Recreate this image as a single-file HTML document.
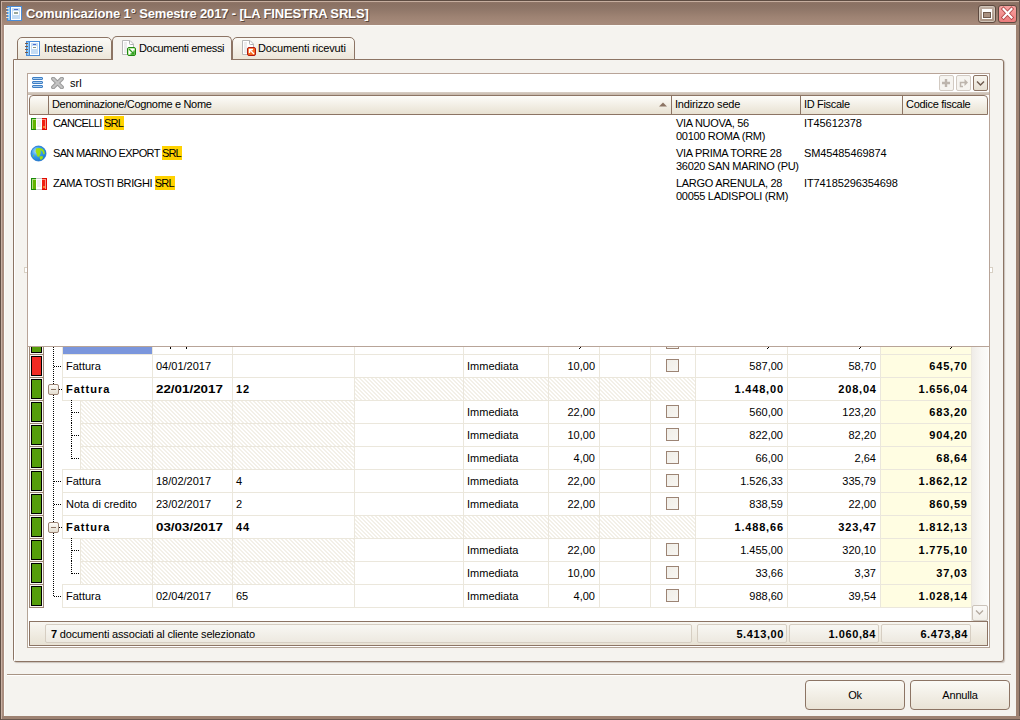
<!DOCTYPE html><html><head><meta charset="utf-8"><style>
html,body{margin:0;padding:0;}
body{width:1020px;height:720px;overflow:hidden;position:relative;background:#f5f3ef;font-family:"Liberation Sans", sans-serif;font-size:11px;color:#000;}
div{box-sizing:border-box;}
.t{position:absolute;white-space:nowrap;line-height:13px;}
.b{font-weight:bold;}
</style></head><body>
<div style="position:absolute;left:0px;top:0px;width:1020px;height:25px;background:linear-gradient(#957b6c 0px,#8a7163 4px,#8f7668 9px,#9e8373 17px,#a68a7b 24px);"></div>
<div style="position:absolute;left:0px;top:0px;width:1020px;height:1px;background:#5e4c42;"></div>
<div style="position:absolute;left:1px;top:1px;width:1018px;height:1px;background:#c6ae9f;"></div>
<div style="position:absolute;left:2px;top:25px;width:2px;height:691px;background:#aa8e80;"></div>
<div style="position:absolute;left:1016px;top:25px;width:3px;height:691px;background:#9e8272;"></div>
<div style="position:absolute;left:1019px;top:0px;width:1px;height:720px;background:#6a5850;"></div>
<div style="position:absolute;left:0px;top:716px;width:1020px;height:3px;background:#9e8272;"></div>
<div style="position:absolute;left:0px;top:719px;width:1020px;height:1px;background:#6a5850;"></div>
<div style="position:absolute;left:0px;top:0px;width:1px;height:720px;background:#604e44;"></div>
<div style="position:absolute;left:1px;top:1px;width:1px;height:718px;background:#c8b0a2;"></div>
<div style="position:absolute;left:4px;top:25px;width:1012px;height:1px;background:#fbfaf6;"></div>
<div style="position:absolute;left:4px;top:25px;width:1px;height:691px;background:#fcfcf8;"></div>
<svg style="position:absolute;left:6px;top:6px" width="16" height="15" viewBox="0 0 16 15" shape-rendering="crispEdges">
<rect x="1" y="0" width="15" height="15" fill="#4a8cd8"/>
<rect x="2" y="1" width="2" height="13" fill="#8cc8f4"/>
<rect x="5" y="1" width="10" height="13" fill="#ffffff"/>
<rect x="6" y="2" width="8" height="11" fill="#c4dcf4"/>
<rect x="8" y="3" width="4" height="1" fill="#4a6ad0"/>
<rect x="7" y="5" width="6" height="4" fill="#ffffff"/>
<rect x="8" y="6" width="4" height="2" fill="#9aa89a"/>
<g fill="#e8e0d8"><rect x="0" y="2" width="3" height="1"/><rect x="0" y="5" width="3" height="1"/><rect x="0" y="8" width="3" height="1"/><rect x="0" y="11" width="3" height="1"/></g>
</svg>
<div class="t" style="left:26px;top:5px;font-size:13px;line-height:16px;font-weight:bold;color:#fff;text-shadow:1px 1px 0 #5a463c;letter-spacing:-0.15px;top:6px">Comunicazione 1° Semestre 2017 - [LA FINESTRA SRLS]</div>
<div style="position:absolute;left:978px;top:5px;width:18px;height:18px;border:1px solid #5e4a40;border-radius:3px;background:linear-gradient(#c0b0a4,#a89282);box-shadow:inset 0 0 0 1px #d0c4b8"></div>
<div style="position:absolute;left:982px;top:9px;width:10px;height:10px;background:#fff;"></div>
<div style="position:absolute;left:983px;top:12px;width:8px;height:6px;background:#a89080;border:1px solid #6e5a4e"></div>
<div style="position:absolute;left:998px;top:5px;width:19px;height:18px;border:1px solid #5e4a40;border-radius:3px;background:linear-gradient(#f7a4a2,#ec7c7c);"></div>
<svg style="position:absolute;left:998px;top:5px" width="19" height="18" viewBox="0 0 19 18">
<path d="M5.5 4 L13.5 12.5 M13.5 4 L5.5 12.5" stroke="#b04848" stroke-width="3.8" stroke-linecap="square"/>
<path d="M5.5 4 L13.5 12.5 M13.5 4 L5.5 12.5" stroke="#ffffff" stroke-width="2.1" stroke-linecap="square"/>
</svg>
<div style="position:absolute;left:13px;top:59px;width:991px;height:603px;border:1px solid #8c7464;border-radius:0 3px 3px 3px;background:#f5f3ef;box-shadow:1px 1px 1px rgba(120,100,90,0.35);"></div>
<div style="position:absolute;left:14px;top:60px;width:1px;height:601px;background:#ffffff;"></div>
<div style="position:absolute;left:17px;top:37px;width:95px;height:23px;border:1px solid #8c7464;border-radius:5px 5px 0 0;background:linear-gradient(#fbfaf6,#ece6d9);"></div>
<div style="position:absolute;left:232px;top:37px;width:123px;height:23px;border:1px solid #8c7464;border-radius:5px 5px 0 0;background:linear-gradient(#fbfaf6,#ece6d9);"></div>
<div style="position:absolute;left:112px;top:36px;width:120px;height:24px;border:1px solid #8c7464;border-bottom:none;border-radius:5px 5px 0 0;background:#f5f3ef;"></div>
<div class="t" style="left:44px;top:42px;text-align:left;line-height:13px">Intestazione</div>
<div class="t" style="left:139px;top:42px;text-align:left;letter-spacing:-0.33px">Documenti emessi</div>
<div class="t" style="left:258px;top:42px;text-align:left;letter-spacing:-0.15px">Documenti ricevuti</div>
<svg style="position:absolute;left:25px;top:41px" width="16" height="15" viewBox="0 0 16 15" shape-rendering="crispEdges">
<rect x="1" y="0" width="14" height="15" fill="#4a8cd8"/>
<rect x="2" y="1" width="2" height="13" fill="#8cc8f4"/>
<rect x="5" y="1" width="9" height="13" fill="#ffffff"/>
<rect x="6" y="2" width="7" height="11" fill="#c4dcf4"/>
<rect x="8" y="3" width="3" height="1" fill="#4a6ad0"/>
<rect x="7" y="5" width="5" height="3" fill="#ffffff"/>
<rect x="8" y="6" width="3" height="1" fill="#8a9a8a"/>
<g fill="#7a5a48"><rect x="0" y="2" width="3" height="1"/><rect x="0" y="5" width="3" height="1"/><rect x="0" y="8" width="3" height="1"/><rect x="0" y="11" width="3" height="1"/></g>
</svg>
<svg style="position:absolute;left:122px;top:40px" width="14" height="16" viewBox="0 0 14 16">
<path d="M0.5 0.5 H8 L11.5 4 V14.5 H0.5 Z" fill="#ffffff" stroke="#b8b8b8"/>
<rect x="2" y="2" width="3" height="11" fill="#ececec"/>
<path d="M7.5 1 V3.5 Q7.5 4.5 8.5 4.5 H11" fill="none" stroke="#b0b0b0"/>
<rect x="5.5" y="7.5" width="8" height="8" rx="1.5" fill="#c8f0b0" stroke="#1e8a10"/>
<rect x="7" y="9" width="5" height="5" fill="#ffffff"/>
<path d="M7 9 L12 14 M12 10.5 V14 H8.5" stroke="#30a020" stroke-width="1.3" fill="none"/>
</svg>
<svg style="position:absolute;left:242px;top:40px" width="14" height="16" viewBox="0 0 14 16">
<path d="M0.5 0.5 H8 L11.5 4 V14.5 H0.5 Z" fill="#ffffff" stroke="#b8b8b8"/>
<rect x="2" y="2" width="3" height="11" fill="#ececec"/>
<path d="M7.5 1 V3.5 Q7.5 4.5 8.5 4.5 H11" fill="none" stroke="#b0b0b0"/>
<rect x="5.5" y="7.5" width="8" height="8" rx="1.5" fill="#f86a20" stroke="#b01810"/>
<path d="M12 14 L7.5 9.5 M7.5 13 V9.5 H11" stroke="#ffffff" stroke-width="1.4" fill="none"/>
</svg>
<svg width="0" height="0" style="position:absolute"><defs><pattern id="hp" x="0" y="0" width="4" height="4" patternUnits="userSpaceOnUse"><g fill="#f3f0e8" shape-rendering="crispEdges"><rect x="0" y="0" width="2" height="1"/><rect x="1" y="1" width="2" height="1"/><rect x="2" y="2" width="2" height="1"/><rect x="3" y="3" width="1" height="1"/><rect x="0" y="3" width="1" height="1"/></g></pattern></defs></svg>
<div style="position:absolute;left:27px;top:73px;width:963px;height:575px;border:1px solid #b4a496;background:#ffffff;"></div>
<div style="position:absolute;left:971px;top:331px;width:17px;height:290px;background:linear-gradient(90deg,#eeebe6,#f8f7f4 60%,#fbfbf9);"></div>
<div style="position:absolute;left:972px;top:605px;width:16px;height:16px;border:1px solid #cbc3ba;border-radius:2px;background:linear-gradient(#fbfaf8,#f1eee8)"></div>
<svg style="position:absolute;left:972px;top:605px" width="16" height="16" viewBox="0 0 16 16"><path d="M4 5.5 L7.5 9 L11 5.5" stroke="#b4aaa0" stroke-width="1.3" fill="none"/></svg>
<div style="position:absolute;left:29px;top:331px;width:15px;height:24px;border:1px solid #9c8676;background:#f8f6f0;"></div>
<div style="position:absolute;left:31px;top:333px;width:11px;height:20px;border:1px solid #000;background:#559e0a;"></div>
<div style="position:absolute;left:62px;top:331px;width:91px;height:24px;border:1px solid #ebe7dc;"></div>
<div style="position:absolute;left:152px;top:331px;width:81px;height:24px;border:1px solid #ebe7dc;"></div>
<div style="position:absolute;left:232px;top:331px;width:123px;height:24px;border:1px solid #ebe7dc;"></div>
<div style="position:absolute;left:354px;top:331px;width:110px;height:24px;border:1px solid #ebe7dc;"></div>
<div style="position:absolute;left:463px;top:331px;width:86px;height:24px;border:1px solid #ebe7dc;"></div>
<div style="position:absolute;left:548px;top:331px;width:52px;height:24px;border:1px solid #ebe7dc;"></div>
<div style="position:absolute;left:599px;top:331px;width:52px;height:24px;border:1px solid #ebe7dc;"></div>
<div style="position:absolute;left:650px;top:331px;width:46px;height:24px;border:1px solid #ebe7dc;"></div>
<div style="position:absolute;left:666px;top:336px;width:13px;height:13px;border:1px solid #9c8474;background:linear-gradient(135deg,#f0eee8,#f8f6f2);"></div>
<div style="position:absolute;left:695px;top:331px;width:93px;height:24px;border:1px solid #ebe7dc;"></div>
<div style="position:absolute;left:787px;top:331px;width:94px;height:24px;border:1px solid #ebe7dc;"></div>
<div style="position:absolute;left:880px;top:331px;width:92px;height:24px;border:1px solid #ebe7dc;background:#fffde2;"></div>
<div style="position:absolute;left:29px;top:354px;width:15px;height:24px;border:1px solid #9c8676;background:#f8f6f0;"></div>
<div style="position:absolute;left:31px;top:356px;width:11px;height:20px;border:1px solid #000;background:#f02a22;"></div>
<div style="position:absolute;left:62px;top:354px;width:91px;height:24px;border:1px solid #ebe7dc;"></div>
<div class="t" style="left:66px;top:360px;text-align:left;">Fattura</div>
<div style="position:absolute;left:152px;top:354px;width:81px;height:24px;border:1px solid #ebe7dc;"></div>
<div class="t" style="left:156px;top:360px;text-align:left;">04/01/2017</div>
<div style="position:absolute;left:232px;top:354px;width:123px;height:24px;border:1px solid #ebe7dc;"></div>
<div style="position:absolute;left:354px;top:354px;width:110px;height:24px;border:1px solid #ebe7dc;"></div>
<div style="position:absolute;left:463px;top:354px;width:86px;height:24px;border:1px solid #ebe7dc;"></div>
<div class="t" style="left:467px;top:360px;text-align:left;">Immediata</div>
<div style="position:absolute;left:548px;top:354px;width:52px;height:24px;border:1px solid #ebe7dc;"></div>
<div class="t" style="left:548px;top:360px;width:47px;text-align:right;">10,00</div>
<div style="position:absolute;left:599px;top:354px;width:52px;height:24px;border:1px solid #ebe7dc;"></div>
<div style="position:absolute;left:650px;top:354px;width:46px;height:24px;border:1px solid #ebe7dc;"></div>
<div style="position:absolute;left:666px;top:359px;width:13px;height:13px;border:1px solid #9c8474;background:linear-gradient(135deg,#f0eee8,#f8f6f2);"></div>
<div style="position:absolute;left:695px;top:354px;width:93px;height:24px;border:1px solid #ebe7dc;"></div>
<div class="t" style="left:695px;top:360px;width:88px;text-align:right;">587,00</div>
<div style="position:absolute;left:787px;top:354px;width:94px;height:24px;border:1px solid #ebe7dc;"></div>
<div class="t" style="left:787px;top:360px;width:89px;text-align:right;">58,70</div>
<div style="position:absolute;left:880px;top:354px;width:92px;height:24px;border:1px solid #ebe7dc;background:#fffde2;"></div>
<div class="t" style="left:880px;top:360px;width:87.8px;text-align:right;font-weight:bold;letter-spacing:0.8px;">645,70</div>
<div style="position:absolute;left:29px;top:377px;width:15px;height:24px;border:1px solid #9c8676;background:#f8f6f0;"></div>
<div style="position:absolute;left:31px;top:379px;width:11px;height:20px;border:1px solid #000;background:#559e0a;"></div>
<div style="position:absolute;left:62px;top:377px;width:91px;height:24px;border:1px solid #ebe7dc;"></div>
<div class="t" style="left:66px;top:383px;text-align:left;font-weight:bold;letter-spacing:1.0px;">Fattura</div>
<div style="position:absolute;left:152px;top:377px;width:81px;height:24px;border:1px solid #ebe7dc;"></div>
<div class="t" style="left:156px;top:383px;text-align:left;font-weight:bold;letter-spacing:0px;transform:scaleX(1.215);transform-origin:0 0;">22/01/2017</div>
<div style="position:absolute;left:232px;top:377px;width:123px;height:24px;border:1px solid #ebe7dc;"></div>
<div class="t" style="left:236px;top:383px;text-align:left;font-weight:bold;letter-spacing:0.8px;">12</div>
<div style="position:absolute;left:354px;top:377px;width:110px;height:24px;border:1px solid #ebe7dc;background:#fff;"><svg width="108" height="22" style="display:block"><rect width="108" height="22" fill="url(#hp)"/></svg></div>
<div style="position:absolute;left:463px;top:377px;width:86px;height:24px;border:1px solid #ebe7dc;background:#fff;"><svg width="84" height="22" style="display:block"><rect width="84" height="22" fill="url(#hp)"/></svg></div>
<div style="position:absolute;left:548px;top:377px;width:52px;height:24px;border:1px solid #ebe7dc;background:#fff;"><svg width="50" height="22" style="display:block"><rect width="50" height="22" fill="url(#hp)"/></svg></div>
<div style="position:absolute;left:599px;top:377px;width:52px;height:24px;border:1px solid #ebe7dc;background:#fff;"><svg width="50" height="22" style="display:block"><rect width="50" height="22" fill="url(#hp)"/></svg></div>
<div style="position:absolute;left:650px;top:377px;width:46px;height:24px;border:1px solid #ebe7dc;background:#fff;"><svg width="44" height="22" style="display:block"><rect width="44" height="22" fill="url(#hp)"/></svg></div>
<div style="position:absolute;left:695px;top:377px;width:93px;height:24px;border:1px solid #ebe7dc;"></div>
<div class="t" style="left:695px;top:383px;width:88.8px;text-align:right;font-weight:bold;letter-spacing:0.8px;">1.448,00</div>
<div style="position:absolute;left:787px;top:377px;width:94px;height:24px;border:1px solid #ebe7dc;"></div>
<div class="t" style="left:787px;top:383px;width:89.8px;text-align:right;font-weight:bold;letter-spacing:0.8px;">208,04</div>
<div style="position:absolute;left:880px;top:377px;width:92px;height:24px;border:1px solid #ebe7dc;background:#fffde2;"></div>
<div class="t" style="left:880px;top:383px;width:87.8px;text-align:right;font-weight:bold;letter-spacing:0.8px;">1.656,04</div>
<div style="position:absolute;left:29px;top:400px;width:15px;height:24px;border:1px solid #9c8676;background:#f8f6f0;"></div>
<div style="position:absolute;left:31px;top:402px;width:11px;height:20px;border:1px solid #000;background:#559e0a;"></div>
<div style="position:absolute;left:80px;top:400px;width:73px;height:24px;border:1px solid #ebe7dc;background:#fff;"><svg width="71" height="22" style="display:block"><rect width="71" height="22" fill="url(#hp)"/></svg></div>
<div style="position:absolute;left:152px;top:400px;width:81px;height:24px;border:1px solid #ebe7dc;background:#fff;"><svg width="79" height="22" style="display:block"><rect width="79" height="22" fill="url(#hp)"/></svg></div>
<div style="position:absolute;left:232px;top:400px;width:123px;height:24px;border:1px solid #ebe7dc;background:#fff;"><svg width="121" height="22" style="display:block"><rect width="121" height="22" fill="url(#hp)"/></svg></div>
<div style="position:absolute;left:354px;top:400px;width:110px;height:24px;border:1px solid #ebe7dc;"></div>
<div style="position:absolute;left:463px;top:400px;width:86px;height:24px;border:1px solid #ebe7dc;"></div>
<div class="t" style="left:467px;top:406px;text-align:left;">Immediata</div>
<div style="position:absolute;left:548px;top:400px;width:52px;height:24px;border:1px solid #ebe7dc;"></div>
<div class="t" style="left:548px;top:406px;width:47px;text-align:right;">22,00</div>
<div style="position:absolute;left:599px;top:400px;width:52px;height:24px;border:1px solid #ebe7dc;"></div>
<div style="position:absolute;left:650px;top:400px;width:46px;height:24px;border:1px solid #ebe7dc;"></div>
<div style="position:absolute;left:666px;top:405px;width:13px;height:13px;border:1px solid #9c8474;background:linear-gradient(135deg,#f0eee8,#f8f6f2);"></div>
<div style="position:absolute;left:695px;top:400px;width:93px;height:24px;border:1px solid #ebe7dc;"></div>
<div class="t" style="left:695px;top:406px;width:88px;text-align:right;">560,00</div>
<div style="position:absolute;left:787px;top:400px;width:94px;height:24px;border:1px solid #ebe7dc;"></div>
<div class="t" style="left:787px;top:406px;width:89px;text-align:right;">123,20</div>
<div style="position:absolute;left:880px;top:400px;width:92px;height:24px;border:1px solid #ebe7dc;background:#fffde2;"></div>
<div class="t" style="left:880px;top:406px;width:87.8px;text-align:right;font-weight:bold;letter-spacing:0.8px;">683,20</div>
<div style="position:absolute;left:29px;top:423px;width:15px;height:24px;border:1px solid #9c8676;background:#f8f6f0;"></div>
<div style="position:absolute;left:31px;top:425px;width:11px;height:20px;border:1px solid #000;background:#559e0a;"></div>
<div style="position:absolute;left:80px;top:423px;width:73px;height:24px;border:1px solid #ebe7dc;background:#fff;"><svg width="71" height="22" style="display:block"><rect width="71" height="22" fill="url(#hp)"/></svg></div>
<div style="position:absolute;left:152px;top:423px;width:81px;height:24px;border:1px solid #ebe7dc;background:#fff;"><svg width="79" height="22" style="display:block"><rect width="79" height="22" fill="url(#hp)"/></svg></div>
<div style="position:absolute;left:232px;top:423px;width:123px;height:24px;border:1px solid #ebe7dc;background:#fff;"><svg width="121" height="22" style="display:block"><rect width="121" height="22" fill="url(#hp)"/></svg></div>
<div style="position:absolute;left:354px;top:423px;width:110px;height:24px;border:1px solid #ebe7dc;"></div>
<div style="position:absolute;left:463px;top:423px;width:86px;height:24px;border:1px solid #ebe7dc;"></div>
<div class="t" style="left:467px;top:429px;text-align:left;">Immediata</div>
<div style="position:absolute;left:548px;top:423px;width:52px;height:24px;border:1px solid #ebe7dc;"></div>
<div class="t" style="left:548px;top:429px;width:47px;text-align:right;">10,00</div>
<div style="position:absolute;left:599px;top:423px;width:52px;height:24px;border:1px solid #ebe7dc;"></div>
<div style="position:absolute;left:650px;top:423px;width:46px;height:24px;border:1px solid #ebe7dc;"></div>
<div style="position:absolute;left:666px;top:428px;width:13px;height:13px;border:1px solid #9c8474;background:linear-gradient(135deg,#f0eee8,#f8f6f2);"></div>
<div style="position:absolute;left:695px;top:423px;width:93px;height:24px;border:1px solid #ebe7dc;"></div>
<div class="t" style="left:695px;top:429px;width:88px;text-align:right;">822,00</div>
<div style="position:absolute;left:787px;top:423px;width:94px;height:24px;border:1px solid #ebe7dc;"></div>
<div class="t" style="left:787px;top:429px;width:89px;text-align:right;">82,20</div>
<div style="position:absolute;left:880px;top:423px;width:92px;height:24px;border:1px solid #ebe7dc;background:#fffde2;"></div>
<div class="t" style="left:880px;top:429px;width:87.8px;text-align:right;font-weight:bold;letter-spacing:0.8px;">904,20</div>
<div style="position:absolute;left:29px;top:446px;width:15px;height:24px;border:1px solid #9c8676;background:#f8f6f0;"></div>
<div style="position:absolute;left:31px;top:448px;width:11px;height:20px;border:1px solid #000;background:#559e0a;"></div>
<div style="position:absolute;left:80px;top:446px;width:73px;height:24px;border:1px solid #ebe7dc;background:#fff;"><svg width="71" height="22" style="display:block"><rect width="71" height="22" fill="url(#hp)"/></svg></div>
<div style="position:absolute;left:152px;top:446px;width:81px;height:24px;border:1px solid #ebe7dc;background:#fff;"><svg width="79" height="22" style="display:block"><rect width="79" height="22" fill="url(#hp)"/></svg></div>
<div style="position:absolute;left:232px;top:446px;width:123px;height:24px;border:1px solid #ebe7dc;background:#fff;"><svg width="121" height="22" style="display:block"><rect width="121" height="22" fill="url(#hp)"/></svg></div>
<div style="position:absolute;left:354px;top:446px;width:110px;height:24px;border:1px solid #ebe7dc;"></div>
<div style="position:absolute;left:463px;top:446px;width:86px;height:24px;border:1px solid #ebe7dc;"></div>
<div class="t" style="left:467px;top:452px;text-align:left;">Immediata</div>
<div style="position:absolute;left:548px;top:446px;width:52px;height:24px;border:1px solid #ebe7dc;"></div>
<div class="t" style="left:548px;top:452px;width:47px;text-align:right;">4,00</div>
<div style="position:absolute;left:599px;top:446px;width:52px;height:24px;border:1px solid #ebe7dc;"></div>
<div style="position:absolute;left:650px;top:446px;width:46px;height:24px;border:1px solid #ebe7dc;"></div>
<div style="position:absolute;left:666px;top:451px;width:13px;height:13px;border:1px solid #9c8474;background:linear-gradient(135deg,#f0eee8,#f8f6f2);"></div>
<div style="position:absolute;left:695px;top:446px;width:93px;height:24px;border:1px solid #ebe7dc;"></div>
<div class="t" style="left:695px;top:452px;width:88px;text-align:right;">66,00</div>
<div style="position:absolute;left:787px;top:446px;width:94px;height:24px;border:1px solid #ebe7dc;"></div>
<div class="t" style="left:787px;top:452px;width:89px;text-align:right;">2,64</div>
<div style="position:absolute;left:880px;top:446px;width:92px;height:24px;border:1px solid #ebe7dc;background:#fffde2;"></div>
<div class="t" style="left:880px;top:452px;width:87.8px;text-align:right;font-weight:bold;letter-spacing:0.8px;">68,64</div>
<div style="position:absolute;left:29px;top:469px;width:15px;height:24px;border:1px solid #9c8676;background:#f8f6f0;"></div>
<div style="position:absolute;left:31px;top:471px;width:11px;height:20px;border:1px solid #000;background:#559e0a;"></div>
<div style="position:absolute;left:62px;top:469px;width:91px;height:24px;border:1px solid #ebe7dc;"></div>
<div class="t" style="left:66px;top:475px;text-align:left;">Fattura</div>
<div style="position:absolute;left:152px;top:469px;width:81px;height:24px;border:1px solid #ebe7dc;"></div>
<div class="t" style="left:156px;top:475px;text-align:left;">18/02/2017</div>
<div style="position:absolute;left:232px;top:469px;width:123px;height:24px;border:1px solid #ebe7dc;"></div>
<div class="t" style="left:236px;top:475px;text-align:left;">4</div>
<div style="position:absolute;left:354px;top:469px;width:110px;height:24px;border:1px solid #ebe7dc;"></div>
<div style="position:absolute;left:463px;top:469px;width:86px;height:24px;border:1px solid #ebe7dc;"></div>
<div class="t" style="left:467px;top:475px;text-align:left;">Immediata</div>
<div style="position:absolute;left:548px;top:469px;width:52px;height:24px;border:1px solid #ebe7dc;"></div>
<div class="t" style="left:548px;top:475px;width:47px;text-align:right;">22,00</div>
<div style="position:absolute;left:599px;top:469px;width:52px;height:24px;border:1px solid #ebe7dc;"></div>
<div style="position:absolute;left:650px;top:469px;width:46px;height:24px;border:1px solid #ebe7dc;"></div>
<div style="position:absolute;left:666px;top:474px;width:13px;height:13px;border:1px solid #9c8474;background:linear-gradient(135deg,#f0eee8,#f8f6f2);"></div>
<div style="position:absolute;left:695px;top:469px;width:93px;height:24px;border:1px solid #ebe7dc;"></div>
<div class="t" style="left:695px;top:475px;width:88px;text-align:right;">1.526,33</div>
<div style="position:absolute;left:787px;top:469px;width:94px;height:24px;border:1px solid #ebe7dc;"></div>
<div class="t" style="left:787px;top:475px;width:89px;text-align:right;">335,79</div>
<div style="position:absolute;left:880px;top:469px;width:92px;height:24px;border:1px solid #ebe7dc;background:#fffde2;"></div>
<div class="t" style="left:880px;top:475px;width:87.8px;text-align:right;font-weight:bold;letter-spacing:0.8px;">1.862,12</div>
<div style="position:absolute;left:29px;top:492px;width:15px;height:24px;border:1px solid #9c8676;background:#f8f6f0;"></div>
<div style="position:absolute;left:31px;top:494px;width:11px;height:20px;border:1px solid #000;background:#559e0a;"></div>
<div style="position:absolute;left:62px;top:492px;width:91px;height:24px;border:1px solid #ebe7dc;"></div>
<div class="t" style="left:66px;top:498px;text-align:left;">Nota di credito</div>
<div style="position:absolute;left:152px;top:492px;width:81px;height:24px;border:1px solid #ebe7dc;"></div>
<div class="t" style="left:156px;top:498px;text-align:left;">23/02/2017</div>
<div style="position:absolute;left:232px;top:492px;width:123px;height:24px;border:1px solid #ebe7dc;"></div>
<div class="t" style="left:236px;top:498px;text-align:left;">2</div>
<div style="position:absolute;left:354px;top:492px;width:110px;height:24px;border:1px solid #ebe7dc;"></div>
<div style="position:absolute;left:463px;top:492px;width:86px;height:24px;border:1px solid #ebe7dc;"></div>
<div class="t" style="left:467px;top:498px;text-align:left;">Immediata</div>
<div style="position:absolute;left:548px;top:492px;width:52px;height:24px;border:1px solid #ebe7dc;"></div>
<div class="t" style="left:548px;top:498px;width:47px;text-align:right;">22,00</div>
<div style="position:absolute;left:599px;top:492px;width:52px;height:24px;border:1px solid #ebe7dc;"></div>
<div style="position:absolute;left:650px;top:492px;width:46px;height:24px;border:1px solid #ebe7dc;"></div>
<div style="position:absolute;left:666px;top:497px;width:13px;height:13px;border:1px solid #9c8474;background:linear-gradient(135deg,#f0eee8,#f8f6f2);"></div>
<div style="position:absolute;left:695px;top:492px;width:93px;height:24px;border:1px solid #ebe7dc;"></div>
<div class="t" style="left:695px;top:498px;width:88px;text-align:right;">838,59</div>
<div style="position:absolute;left:787px;top:492px;width:94px;height:24px;border:1px solid #ebe7dc;"></div>
<div class="t" style="left:787px;top:498px;width:89px;text-align:right;">22,00</div>
<div style="position:absolute;left:880px;top:492px;width:92px;height:24px;border:1px solid #ebe7dc;background:#fffde2;"></div>
<div class="t" style="left:880px;top:498px;width:87.8px;text-align:right;font-weight:bold;letter-spacing:0.8px;">860,59</div>
<div style="position:absolute;left:29px;top:515px;width:15px;height:24px;border:1px solid #9c8676;background:#f8f6f0;"></div>
<div style="position:absolute;left:31px;top:517px;width:11px;height:20px;border:1px solid #000;background:#559e0a;"></div>
<div style="position:absolute;left:62px;top:515px;width:91px;height:24px;border:1px solid #ebe7dc;"></div>
<div class="t" style="left:66px;top:521px;text-align:left;font-weight:bold;letter-spacing:1.0px;">Fattura</div>
<div style="position:absolute;left:152px;top:515px;width:81px;height:24px;border:1px solid #ebe7dc;"></div>
<div class="t" style="left:156px;top:521px;text-align:left;font-weight:bold;letter-spacing:0px;transform:scaleX(1.215);transform-origin:0 0;">03/03/2017</div>
<div style="position:absolute;left:232px;top:515px;width:123px;height:24px;border:1px solid #ebe7dc;"></div>
<div class="t" style="left:236px;top:521px;text-align:left;font-weight:bold;letter-spacing:0.8px;">44</div>
<div style="position:absolute;left:354px;top:515px;width:110px;height:24px;border:1px solid #ebe7dc;background:#fff;"><svg width="108" height="22" style="display:block"><rect width="108" height="22" fill="url(#hp)"/></svg></div>
<div style="position:absolute;left:463px;top:515px;width:86px;height:24px;border:1px solid #ebe7dc;background:#fff;"><svg width="84" height="22" style="display:block"><rect width="84" height="22" fill="url(#hp)"/></svg></div>
<div style="position:absolute;left:548px;top:515px;width:52px;height:24px;border:1px solid #ebe7dc;background:#fff;"><svg width="50" height="22" style="display:block"><rect width="50" height="22" fill="url(#hp)"/></svg></div>
<div style="position:absolute;left:599px;top:515px;width:52px;height:24px;border:1px solid #ebe7dc;background:#fff;"><svg width="50" height="22" style="display:block"><rect width="50" height="22" fill="url(#hp)"/></svg></div>
<div style="position:absolute;left:650px;top:515px;width:46px;height:24px;border:1px solid #ebe7dc;background:#fff;"><svg width="44" height="22" style="display:block"><rect width="44" height="22" fill="url(#hp)"/></svg></div>
<div style="position:absolute;left:695px;top:515px;width:93px;height:24px;border:1px solid #ebe7dc;"></div>
<div class="t" style="left:695px;top:521px;width:88.8px;text-align:right;font-weight:bold;letter-spacing:0.8px;">1.488,66</div>
<div style="position:absolute;left:787px;top:515px;width:94px;height:24px;border:1px solid #ebe7dc;"></div>
<div class="t" style="left:787px;top:521px;width:89.8px;text-align:right;font-weight:bold;letter-spacing:0.8px;">323,47</div>
<div style="position:absolute;left:880px;top:515px;width:92px;height:24px;border:1px solid #ebe7dc;background:#fffde2;"></div>
<div class="t" style="left:880px;top:521px;width:87.8px;text-align:right;font-weight:bold;letter-spacing:0.8px;">1.812,13</div>
<div style="position:absolute;left:29px;top:538px;width:15px;height:24px;border:1px solid #9c8676;background:#f8f6f0;"></div>
<div style="position:absolute;left:31px;top:540px;width:11px;height:20px;border:1px solid #000;background:#559e0a;"></div>
<div style="position:absolute;left:80px;top:538px;width:73px;height:24px;border:1px solid #ebe7dc;background:#fff;"><svg width="71" height="22" style="display:block"><rect width="71" height="22" fill="url(#hp)"/></svg></div>
<div style="position:absolute;left:152px;top:538px;width:81px;height:24px;border:1px solid #ebe7dc;background:#fff;"><svg width="79" height="22" style="display:block"><rect width="79" height="22" fill="url(#hp)"/></svg></div>
<div style="position:absolute;left:232px;top:538px;width:123px;height:24px;border:1px solid #ebe7dc;background:#fff;"><svg width="121" height="22" style="display:block"><rect width="121" height="22" fill="url(#hp)"/></svg></div>
<div style="position:absolute;left:354px;top:538px;width:110px;height:24px;border:1px solid #ebe7dc;"></div>
<div style="position:absolute;left:463px;top:538px;width:86px;height:24px;border:1px solid #ebe7dc;"></div>
<div class="t" style="left:467px;top:544px;text-align:left;">Immediata</div>
<div style="position:absolute;left:548px;top:538px;width:52px;height:24px;border:1px solid #ebe7dc;"></div>
<div class="t" style="left:548px;top:544px;width:47px;text-align:right;">22,00</div>
<div style="position:absolute;left:599px;top:538px;width:52px;height:24px;border:1px solid #ebe7dc;"></div>
<div style="position:absolute;left:650px;top:538px;width:46px;height:24px;border:1px solid #ebe7dc;"></div>
<div style="position:absolute;left:666px;top:543px;width:13px;height:13px;border:1px solid #9c8474;background:linear-gradient(135deg,#f0eee8,#f8f6f2);"></div>
<div style="position:absolute;left:695px;top:538px;width:93px;height:24px;border:1px solid #ebe7dc;"></div>
<div class="t" style="left:695px;top:544px;width:88px;text-align:right;">1.455,00</div>
<div style="position:absolute;left:787px;top:538px;width:94px;height:24px;border:1px solid #ebe7dc;"></div>
<div class="t" style="left:787px;top:544px;width:89px;text-align:right;">320,10</div>
<div style="position:absolute;left:880px;top:538px;width:92px;height:24px;border:1px solid #ebe7dc;background:#fffde2;"></div>
<div class="t" style="left:880px;top:544px;width:87.8px;text-align:right;font-weight:bold;letter-spacing:0.8px;">1.775,10</div>
<div style="position:absolute;left:29px;top:561px;width:15px;height:24px;border:1px solid #9c8676;background:#f8f6f0;"></div>
<div style="position:absolute;left:31px;top:563px;width:11px;height:20px;border:1px solid #000;background:#559e0a;"></div>
<div style="position:absolute;left:80px;top:561px;width:73px;height:24px;border:1px solid #ebe7dc;background:#fff;"><svg width="71" height="22" style="display:block"><rect width="71" height="22" fill="url(#hp)"/></svg></div>
<div style="position:absolute;left:152px;top:561px;width:81px;height:24px;border:1px solid #ebe7dc;background:#fff;"><svg width="79" height="22" style="display:block"><rect width="79" height="22" fill="url(#hp)"/></svg></div>
<div style="position:absolute;left:232px;top:561px;width:123px;height:24px;border:1px solid #ebe7dc;background:#fff;"><svg width="121" height="22" style="display:block"><rect width="121" height="22" fill="url(#hp)"/></svg></div>
<div style="position:absolute;left:354px;top:561px;width:110px;height:24px;border:1px solid #ebe7dc;"></div>
<div style="position:absolute;left:463px;top:561px;width:86px;height:24px;border:1px solid #ebe7dc;"></div>
<div class="t" style="left:467px;top:567px;text-align:left;">Immediata</div>
<div style="position:absolute;left:548px;top:561px;width:52px;height:24px;border:1px solid #ebe7dc;"></div>
<div class="t" style="left:548px;top:567px;width:47px;text-align:right;">10,00</div>
<div style="position:absolute;left:599px;top:561px;width:52px;height:24px;border:1px solid #ebe7dc;"></div>
<div style="position:absolute;left:650px;top:561px;width:46px;height:24px;border:1px solid #ebe7dc;"></div>
<div style="position:absolute;left:666px;top:566px;width:13px;height:13px;border:1px solid #9c8474;background:linear-gradient(135deg,#f0eee8,#f8f6f2);"></div>
<div style="position:absolute;left:695px;top:561px;width:93px;height:24px;border:1px solid #ebe7dc;"></div>
<div class="t" style="left:695px;top:567px;width:88px;text-align:right;">33,66</div>
<div style="position:absolute;left:787px;top:561px;width:94px;height:24px;border:1px solid #ebe7dc;"></div>
<div class="t" style="left:787px;top:567px;width:89px;text-align:right;">3,37</div>
<div style="position:absolute;left:880px;top:561px;width:92px;height:24px;border:1px solid #ebe7dc;background:#fffde2;"></div>
<div class="t" style="left:880px;top:567px;width:87.8px;text-align:right;font-weight:bold;letter-spacing:0.8px;">37,03</div>
<div style="position:absolute;left:29px;top:584px;width:15px;height:24px;border:1px solid #9c8676;background:#f8f6f0;"></div>
<div style="position:absolute;left:31px;top:586px;width:11px;height:20px;border:1px solid #000;background:#559e0a;"></div>
<div style="position:absolute;left:62px;top:584px;width:91px;height:24px;border:1px solid #ebe7dc;"></div>
<div class="t" style="left:66px;top:590px;text-align:left;">Fattura</div>
<div style="position:absolute;left:152px;top:584px;width:81px;height:24px;border:1px solid #ebe7dc;"></div>
<div class="t" style="left:156px;top:590px;text-align:left;">02/04/2017</div>
<div style="position:absolute;left:232px;top:584px;width:123px;height:24px;border:1px solid #ebe7dc;"></div>
<div class="t" style="left:236px;top:590px;text-align:left;">65</div>
<div style="position:absolute;left:354px;top:584px;width:110px;height:24px;border:1px solid #ebe7dc;"></div>
<div style="position:absolute;left:463px;top:584px;width:86px;height:24px;border:1px solid #ebe7dc;"></div>
<div class="t" style="left:467px;top:590px;text-align:left;">Immediata</div>
<div style="position:absolute;left:548px;top:584px;width:52px;height:24px;border:1px solid #ebe7dc;"></div>
<div class="t" style="left:548px;top:590px;width:47px;text-align:right;">4,00</div>
<div style="position:absolute;left:599px;top:584px;width:52px;height:24px;border:1px solid #ebe7dc;"></div>
<div style="position:absolute;left:650px;top:584px;width:46px;height:24px;border:1px solid #ebe7dc;"></div>
<div style="position:absolute;left:666px;top:589px;width:13px;height:13px;border:1px solid #9c8474;background:linear-gradient(135deg,#f0eee8,#f8f6f2);"></div>
<div style="position:absolute;left:695px;top:584px;width:93px;height:24px;border:1px solid #ebe7dc;"></div>
<div class="t" style="left:695px;top:590px;width:88px;text-align:right;">988,60</div>
<div style="position:absolute;left:787px;top:584px;width:94px;height:24px;border:1px solid #ebe7dc;"></div>
<div class="t" style="left:787px;top:590px;width:89px;text-align:right;">39,54</div>
<div style="position:absolute;left:880px;top:584px;width:92px;height:24px;border:1px solid #ebe7dc;background:#fffde2;"></div>
<div class="t" style="left:880px;top:590px;width:87.8px;text-align:right;font-weight:bold;letter-spacing:0.8px;">1.028,14</div>
<div style="position:absolute;left:170px;top:347px;width:1px;height:2px;background:#000;"></div>
<div style="position:absolute;left:186px;top:347px;width:1px;height:2px;background:#000;"></div>
<div style="position:absolute;left:580px;top:347px;width:1px;height:1px;background:#000;"></div>
<div style="position:absolute;left:579px;top:348px;width:1px;height:1px;background:#000;"></div>
<div style="position:absolute;left:768px;top:347px;width:1px;height:1px;background:#000;"></div>
<div style="position:absolute;left:767px;top:348px;width:1px;height:1px;background:#000;"></div>
<div style="position:absolute;left:860px;top:347px;width:1px;height:1px;background:#000;"></div>
<div style="position:absolute;left:859px;top:348px;width:1px;height:1px;background:#000;"></div>
<div style="position:absolute;left:951px;top:347px;width:1px;height:1px;background:#000;"></div>
<div style="position:absolute;left:950px;top:348px;width:1px;height:1px;background:#000;"></div>
<div style="position:absolute;left:63px;top:347px;width:89px;height:7px;background:#7b96dc;"></div>
<div style="position:absolute;left:53px;top:331px;width:1px;height:265px;background-image:linear-gradient(#000 50%,transparent 50%);background-size:1px 2px;"></div>
<div style="position:absolute;left:54px;top:343px;width:8px;height:1px;background-image:linear-gradient(90deg,#000 50%,transparent 50%);background-size:2px 1px;"></div>
<div style="position:absolute;left:54px;top:366px;width:8px;height:1px;background-image:linear-gradient(90deg,#000 50%,transparent 50%);background-size:2px 1px;"></div>
<div style="position:absolute;left:59px;top:389px;width:3px;height:1px;background-image:linear-gradient(90deg,#000 50%,transparent 50%);background-size:2px 1px;"></div>
<div style="position:absolute;left:48px;top:384px;width:11px;height:11px;border:1px solid #9c8474;border-radius:2px;background:linear-gradient(#fdfcf8,#e4ddd0)"></div>
<div style="position:absolute;left:51px;top:389px;width:5px;height:1px;background:#8c7464;"></div>
<div style="position:absolute;left:71px;top:400px;width:1px;height:23px;background-image:linear-gradient(#000 50%,transparent 50%);background-size:1px 2px;"></div>
<div style="position:absolute;left:72px;top:412px;width:8px;height:1px;background-image:linear-gradient(90deg,#000 50%,transparent 50%);background-size:2px 1px;"></div>
<div style="position:absolute;left:71px;top:423px;width:1px;height:23px;background-image:linear-gradient(#000 50%,transparent 50%);background-size:1px 2px;"></div>
<div style="position:absolute;left:72px;top:435px;width:8px;height:1px;background-image:linear-gradient(90deg,#000 50%,transparent 50%);background-size:2px 1px;"></div>
<div style="position:absolute;left:71px;top:446px;width:1px;height:13px;background-image:linear-gradient(#000 50%,transparent 50%);background-size:1px 2px;"></div>
<div style="position:absolute;left:72px;top:458px;width:8px;height:1px;background-image:linear-gradient(90deg,#000 50%,transparent 50%);background-size:2px 1px;"></div>
<div style="position:absolute;left:54px;top:481px;width:8px;height:1px;background-image:linear-gradient(90deg,#000 50%,transparent 50%);background-size:2px 1px;"></div>
<div style="position:absolute;left:54px;top:504px;width:8px;height:1px;background-image:linear-gradient(90deg,#000 50%,transparent 50%);background-size:2px 1px;"></div>
<div style="position:absolute;left:59px;top:527px;width:3px;height:1px;background-image:linear-gradient(90deg,#000 50%,transparent 50%);background-size:2px 1px;"></div>
<div style="position:absolute;left:48px;top:522px;width:11px;height:11px;border:1px solid #9c8474;border-radius:2px;background:linear-gradient(#fdfcf8,#e4ddd0)"></div>
<div style="position:absolute;left:51px;top:527px;width:5px;height:1px;background:#8c7464;"></div>
<div style="position:absolute;left:71px;top:538px;width:1px;height:23px;background-image:linear-gradient(#000 50%,transparent 50%);background-size:1px 2px;"></div>
<div style="position:absolute;left:72px;top:550px;width:8px;height:1px;background-image:linear-gradient(90deg,#000 50%,transparent 50%);background-size:2px 1px;"></div>
<div style="position:absolute;left:71px;top:561px;width:1px;height:13px;background-image:linear-gradient(#000 50%,transparent 50%);background-size:1px 2px;"></div>
<div style="position:absolute;left:72px;top:573px;width:8px;height:1px;background-image:linear-gradient(90deg,#000 50%,transparent 50%);background-size:2px 1px;"></div>
<div style="position:absolute;left:54px;top:596px;width:8px;height:1px;background-image:linear-gradient(90deg,#000 50%,transparent 50%);background-size:2px 1px;"></div>
<div style="position:absolute;left:29px;top:621px;width:959px;height:25px;border:1px solid #8c7464;background:linear-gradient(#f8f6f1,#e8e2d4);"></div>
<div style="position:absolute;left:45px;top:624px;width:647px;height:19px;border:1px solid #d6cec2;border-radius:2px;background:linear-gradient(#f8f7f3,#ede9e0);"></div>
<div style="position:absolute;left:697px;top:624px;width:90px;height:19px;border:1px solid #d6cec2;border-radius:2px;background:linear-gradient(#f8f7f3,#ede9e0);"></div>
<div class="t" style="left:697px;top:628px;width:87px;text-align:right;font-weight:bold;letter-spacing:0.6px">5.413,00</div>
<div style="position:absolute;left:789px;top:624px;width:90px;height:19px;border:1px solid #d6cec2;border-radius:2px;background:linear-gradient(#f8f7f3,#ede9e0);"></div>
<div class="t" style="left:789px;top:628px;width:87px;text-align:right;font-weight:bold;letter-spacing:0.6px">1.060,84</div>
<div style="position:absolute;left:881px;top:624px;width:90px;height:19px;border:1px solid #d6cec2;border-radius:2px;background:linear-gradient(#f8f7f3,#ede9e0);"></div>
<div class="t" style="left:881px;top:628px;width:87px;text-align:right;font-weight:bold;letter-spacing:0.6px">6.473,84</div>
<div class="t" style="left:51px;top:628px;text-align:left;letter-spacing:-0.16px"><b>7</b> documenti associati al cliente selezionato</div>
<div style="position:absolute;left:27px;top:73px;width:963px;height:274px;border:1px solid #b8a498;background:#fff;"></div>
<div style="position:absolute;left:28px;top:74px;width:961px;height:19px;background:#fff;"></div>
<div style="position:absolute;left:28px;top:92px;width:961px;height:3px;background:linear-gradient(#d8cfc6,#c6b8aa);"></div>
<div style="position:absolute;left:29px;top:95px;width:959px;height:20px;border:1px solid #8c7464;border-radius:4px 4px 0 0;background:linear-gradient(#fdfcf9,#e8e1d2);"></div>
<div style="position:absolute;left:48px;top:96px;width:1px;height:18px;background:#8c7464;"></div>
<div style="position:absolute;left:671px;top:96px;width:1px;height:18px;background:#8c7464;"></div>
<div style="position:absolute;left:800px;top:96px;width:1px;height:18px;background:#8c7464;"></div>
<div style="position:absolute;left:902px;top:96px;width:1px;height:18px;background:#8c7464;"></div>
<div class="t" style="left:52px;top:96px;text-align:left;line-height:16px;letter-spacing:-0.33px">Denominazione/Cognome e Nome</div>
<div class="t" style="left:675px;top:96px;text-align:left;line-height:16px;letter-spacing:-0.19px">Indirizzo sede</div>
<div class="t" style="left:804px;top:96px;text-align:left;line-height:16px;letter-spacing:-0.32px">ID Fiscale</div>
<div class="t" style="left:906px;top:96px;text-align:left;line-height:16px;letter-spacing:-0.29px">Codice fiscale</div>
<svg style="position:absolute;left:659px;top:102px" width="8" height="5"><path d="M0 4.5 L4 0.5 L8 4.5 Z" fill="#8c7464"/></svg>
<svg style="position:absolute;left:32px;top:77px" width="11" height="12" viewBox="0 0 11 12">
<g fill="#a8cdf0" stroke="#3f7fc4"><rect x="0.5" y="0.5" width="10" height="2" rx="0.5"/><rect x="0.5" y="4.5" width="10" height="2" rx="0.5"/><rect x="0.5" y="8.5" width="10" height="2" rx="0.5"/></g></svg>
<svg style="position:absolute;left:51px;top:77px" width="13" height="12" viewBox="0 0 13 12">
<path d="M2.2 1.8 L10.8 10.2 M10.8 1.8 L2.2 10.2" stroke="#9a9a9a" stroke-width="4.2" stroke-linecap="round"/>
<path d="M2.2 1.8 L10.8 10.2 M10.8 1.8 L2.2 10.2" stroke="#c4c4c4" stroke-width="2.2" stroke-linecap="round"/></svg>
<div class="t" style="left:70px;top:77px;text-align:left;line-height:13px">srl</div>
<div style="position:absolute;left:939px;top:75px;width:15px;height:16px;border:1px solid #d2cac2;border-radius:2px;background:#f6f4f0"></div>
<svg style="position:absolute;left:939px;top:75px" width="15" height="16"><path d="M7 4 V12 M3 8 H11" stroke="#bdb5ad" stroke-width="2.4"/></svg>
<div style="position:absolute;left:956px;top:75px;width:15px;height:16px;border:1px solid #d2cac2;border-radius:2px;background:#f6f4f0"></div>
<svg style="position:absolute;left:956px;top:75px" width="15" height="16"><path d="M7 11.5 H4.5 V7.5 H9.5" stroke="#bdb5ad" stroke-width="1.5" fill="none"/><path d="M8.5 4 L12 7.5 L8.5 11 Z" fill="#bdb5ad"/></svg>
<div style="position:absolute;left:973px;top:75px;width:15px;height:16px;border:1px solid #8c7464;border-radius:2px;background:linear-gradient(#f8f6f0,#e6dfd2)"></div>
<svg style="position:absolute;left:973px;top:75px" width="15" height="16"><path d="M4 6.5 L7.5 10 L11 6.5" stroke="#6e5a4e" stroke-width="1.4" fill="none"/></svg>
<div class="t" style="left:53px;top:117px;letter-spacing:-0.65px;line-height:13px">CANCELLI <span style="display:inline-block;background:#ffd200;padding:0 1px 0 0;letter-spacing:-0.8px;height:13px;line-height:13px;vertical-align:top;box-shadow:0 -1px 0 #ffd200">SRL</span></div>
<div class="t" style="left:676px;top:117px;text-align:left;letter-spacing:-0.3px">VIA NUOVA, 56<br>00100 ROMA (RM)</div>
<div class="t" style="left:804px;top:117px;text-align:left;letter-spacing:-0.1px">IT45612378</div>
<svg style="position:absolute;left:31px;top:118px" width="16" height="12" viewBox="0 0 16 12" shape-rendering="crispEdges">
<rect x="0" y="0" width="5" height="12" fill="#1a8a0a"/>
<rect x="1" y="1" width="4" height="10" fill="#b0dc80"/>
<rect x="2" y="2" width="3" height="9" fill="#62b400"/>
<rect x="5" y="0" width="6" height="12" fill="#c8c8c8"/>
<rect x="5" y="1" width="6" height="10" fill="#ffffff"/>
<rect x="6" y="2" width="4" height="7" fill="#eeeeee"/>
<rect x="11" y="0" width="5" height="12" fill="#e00a00"/>
<rect x="11" y="1" width="4" height="10" fill="#f89888"/>
<rect x="11" y="2" width="3" height="9" fill="#f02010"/>
<rect x="12" y="8" width="2" height="2" fill="#f88030"/>
</svg>
<div class="t" style="left:53px;top:147px;letter-spacing:-0.65px;line-height:13px">SAN MARINO EXPORT <span style="display:inline-block;background:#ffd200;padding:0 1px 0 0;letter-spacing:-0.8px;height:13px;line-height:13px;vertical-align:top;box-shadow:0 -1px 0 #ffd200">SRL</span></div>
<div class="t" style="left:676px;top:147px;text-align:left;letter-spacing:-0.3px">VIA PRIMA TORRE 28<br>36020 SAN MARINO (PU)</div>
<div class="t" style="left:804px;top:147px;text-align:left;letter-spacing:-0.1px">SM45485469874</div>
<svg style="position:absolute;left:30px;top:145px" width="17" height="17" viewBox="0 0 17 17">
<defs><radialGradient id="gg" cx="0.35" cy="0.35" r="0.7"><stop offset="0" stop-color="#b8dcfc"/><stop offset="0.45" stop-color="#3aa0f0"/><stop offset="1" stop-color="#1a78d0"/></radialGradient></defs>
<circle cx="8.5" cy="8.5" r="7.5" fill="url(#gg)" stroke="#1a70c8" stroke-width="0.8"/>
<path d="M6 3.5 Q9 2.2 12.5 3.8 L14.5 6.5 L14.8 9 L13.5 9.5 L12.5 6.5 L10.5 5 L10.8 8 L9.8 10.5 L8.5 12 L7 11 L6.5 8.5 L5.5 6.5 Z" fill="#9ce010"/>
<path d="M9.5 11.5 L12.5 11 L13 13 L11 15 L10 14 Z" fill="#9ce010"/>
<path d="M3 10 L4 10.5 L3.8 11.8 L3 11.2 Z" fill="#9ce010"/>
</svg>
<div class="t" style="left:53px;top:177px;letter-spacing:-0.4px;line-height:13px">ZAMA TOSTI BRIGHI <span style="display:inline-block;background:#ffd200;padding:0 1px 0 0;letter-spacing:-0.8px;height:13px;line-height:13px;vertical-align:top;box-shadow:0 -1px 0 #ffd200">SRL</span></div>
<div class="t" style="left:676px;top:177px;text-align:left;letter-spacing:-0.3px">LARGO ARENULA, 28<br>00055 LADISPOLI (RM)</div>
<div class="t" style="left:804px;top:177px;text-align:left;letter-spacing:-0.1px">IT74185296354698</div>
<svg style="position:absolute;left:31px;top:178px" width="16" height="12" viewBox="0 0 16 12" shape-rendering="crispEdges">
<rect x="0" y="0" width="5" height="12" fill="#1a8a0a"/>
<rect x="1" y="1" width="4" height="10" fill="#b0dc80"/>
<rect x="2" y="2" width="3" height="9" fill="#62b400"/>
<rect x="5" y="0" width="6" height="12" fill="#c8c8c8"/>
<rect x="5" y="1" width="6" height="10" fill="#ffffff"/>
<rect x="6" y="2" width="4" height="7" fill="#eeeeee"/>
<rect x="11" y="0" width="5" height="12" fill="#e00a00"/>
<rect x="11" y="1" width="4" height="10" fill="#f89888"/>
<rect x="11" y="2" width="3" height="9" fill="#f02010"/>
<rect x="12" y="8" width="2" height="2" fill="#f88030"/>
</svg>
<div style="position:absolute;left:24px;top:267px;width:3px;height:6px;border:1px solid #d8d0c4;border-right:none;background:#fff;"></div>
<div style="position:absolute;left:990px;top:267px;width:3px;height:6px;border:1px solid #d8d0c4;border-left:none;background:#fff;"></div>
<div style="position:absolute;left:7px;top:674px;width:1004px;height:1px;background:#a89484;"></div>
<div style="position:absolute;left:7px;top:675px;width:1004px;height:1px;background:#ffffff;"></div>
<div style="position:absolute;left:805px;top:680px;width:100px;height:30px;border:1px solid #8c7464;border-radius:4px;background:linear-gradient(#fbfaf6,#e9e3d6);"></div>
<div class="t" style="left:805px;top:689px;width:100px;text-align:center;line-height:13px;letter-spacing:-0.2px">Ok</div>
<div style="position:absolute;left:910px;top:680px;width:100px;height:30px;border:1px solid #8c7464;border-radius:4px;background:linear-gradient(#fbfaf6,#e9e3d6);"></div>
<div class="t" style="left:910px;top:689px;width:100px;text-align:center;line-height:13px;letter-spacing:-0.2px">Annulla</div>
</body></html>
